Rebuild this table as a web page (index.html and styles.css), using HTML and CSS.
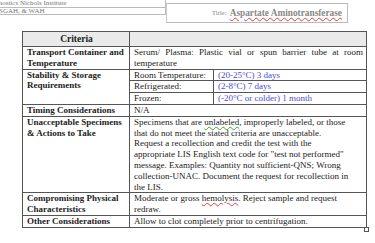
FILE: index.html
```html
<!DOCTYPE html>
<html>
<head>
<meta charset="utf-8">
<link rel="stylesheet" href="styles.css">
</head>
<body>
<div class="page">
  <div class="hdr">
    <div class="hdr-left">
      <div class="hl-row r1">Quest Diagnostics Nichols Institute</div>
      <div class="hl-row r2">QDNI, SGAH, &amp; WAH</div>
    </div>
    <div class="hdr-right">
      <span class="t-lbl">Title:</span>
      <span class="t-val"><span class="spell">Aspartate Aminotransferase</span></span>
    </div>
  </div>

  <div class="tbl-wrap">
    <table class="crit">
      <colgroup>
        <col class="c1"><col class="c2"><col class="c3">
      </colgroup>
      <tr class="head">
        <th>Criteria</th>
        <th colspan="2"></th>
      </tr>
      <tr>
        <td class="lbl">Transport Container and Temperature</td>
        <td colspan="2" class="just">Serum/ Plasma: Plastic vial or spun barrier tube at room temperature</td>
      </tr>
      <tr>
        <td class="lbl" rowspan="3">Stability &amp; Storage Requirements</td>
        <td>Room Temperature:</td>
        <td class="blue">(20-25°C) 3 days</td>
      </tr>
      <tr>
        <td>Refrigerated:</td>
        <td class="blue">(2-8°C) 7 days</td>
      </tr>
      <tr>
        <td>Frozen:</td>
        <td class="blue">(-20°C or colder) 1 month</td>
      </tr>
      <tr>
        <td class="lbl">Timing Considerations</td>
        <td colspan="2">N/A</td>
      </tr>
      <tr>
        <td class="lbl">Unacceptable Specimens &amp; Actions to Take</td>
        <td colspan="2">Specimens that are <span class="gram">unlabeled</span>, improperly labeled, or those<br>that do not meet the stated criteria are unacceptable.<br>Request a recollection and credit the test with the<br>appropriate LIS English text code for &quot;test not performed&quot;<br>message. Examples: Quantity not sufficient-QNS; Wrong<br>collection-UNAC. Document the request for recollection in<br>the LIS.</td>
      </tr>
      <tr>
        <td class="lbl">Compromising Physical Characteristics</td>
        <td colspan="2">Moderate or gross <span class="spell">hemolysis</span>. Reject sample and request<br>redraw.</td>
      </tr>
      <tr>
        <td class="lbl">Other Considerations</td>
        <td colspan="2">Allow to clot completely prior to centrifugation.</td>
      </tr>
    </table>
    <span class="handle"></span>
  </div>
</div>
</body>
</html>
```

FILE: styles.css
```css
* { box-sizing: border-box; }
html, body {
  margin: 0;
  padding: 0;
  background: #fff;
}
body {
  font-family: "Liberation Serif", "Times New Roman", serif;
  color: #222;
  width: 375px;
  height: 243px;
  overflow: hidden;
}
.page {
  position: relative;
}
.hdr {
  display: flex;
  align-items: flex-start;
}
.hdr-left {
  width: 194px;
  margin-left: -28px;
  margin-top: 0;
  border: 1px solid #bbb;
  border-top: none;
  border-left: none;
}
.hl-row {
  font-size: 7px;
  line-height: 7px;
  color: #777;
  padding-left: 2px;
  height: 7px;
  border-top: 1px solid #bbb;
  white-space: nowrap;
  overflow: hidden;
}
.hl-row.r1 {
  border-top: none;
  text-indent: -7px;
  padding-top: 0;
}
.hl-row.r2 {
  padding-left: 6px;
}
.hdr-right {
  width: 182px;
  height: 20px;
  margin-top: 3px;
  border: 1px solid #bbb;
  border-left: 1px solid #ccc;
  display: flex;
  align-items: center;
  justify-content: flex-end;
  padding-right: 5px;
  gap: 3px;
}
.t-lbl {
  font-size: 7px;
  color: #888;
}
.t-val {
  font-size: 9.3px;
  font-weight: bold;
  color: #888;
}
.spell {
  text-decoration: underline wavy #e04040;
  text-decoration-thickness: 1px;
  text-underline-offset: 1px;
}
.gram {
  text-decoration: underline wavy #40a040;
  text-decoration-thickness: 1px;
  text-underline-offset: 1px;
}
.tbl-wrap {
  position: relative;
  margin: 8px 0 0 22px;
  width: 344px;
}
.crit {
  border-collapse: collapse;
  table-layout: fixed;
  width: 344px;
  font-size: 9px;
  line-height: 10.8px;
  border: 1px solid #666;
}
.c1 { width: 107px; }
.c2 { width: 84px; }
.c3 { width: 153px; }
.crit th, .crit td {
  border: 1px solid #555;
  padding: 0 3px 0 4px;
  vertical-align: top;
  text-align: left;
  font-weight: normal;
  color: #222;
}
.crit tr.head th {
  background: #eaeaea;
  height: 15px;
  vertical-align: middle;
}
.crit tr.head th:first-child {
  text-align: center;
  font-weight: bold;
  font-size: 9.5px;
}
.crit td.lbl {
  font-weight: bold;
}
.crit td.just {
  text-align: justify;
}
.crit td.blue {
  color: #4a4ae0;
}
.handle {
  position: absolute;
  right: -3px;
  bottom: -4px;
  width: 5px;
  height: 5px;
  border: 1px solid #555;
  background: #fff;
}
```
